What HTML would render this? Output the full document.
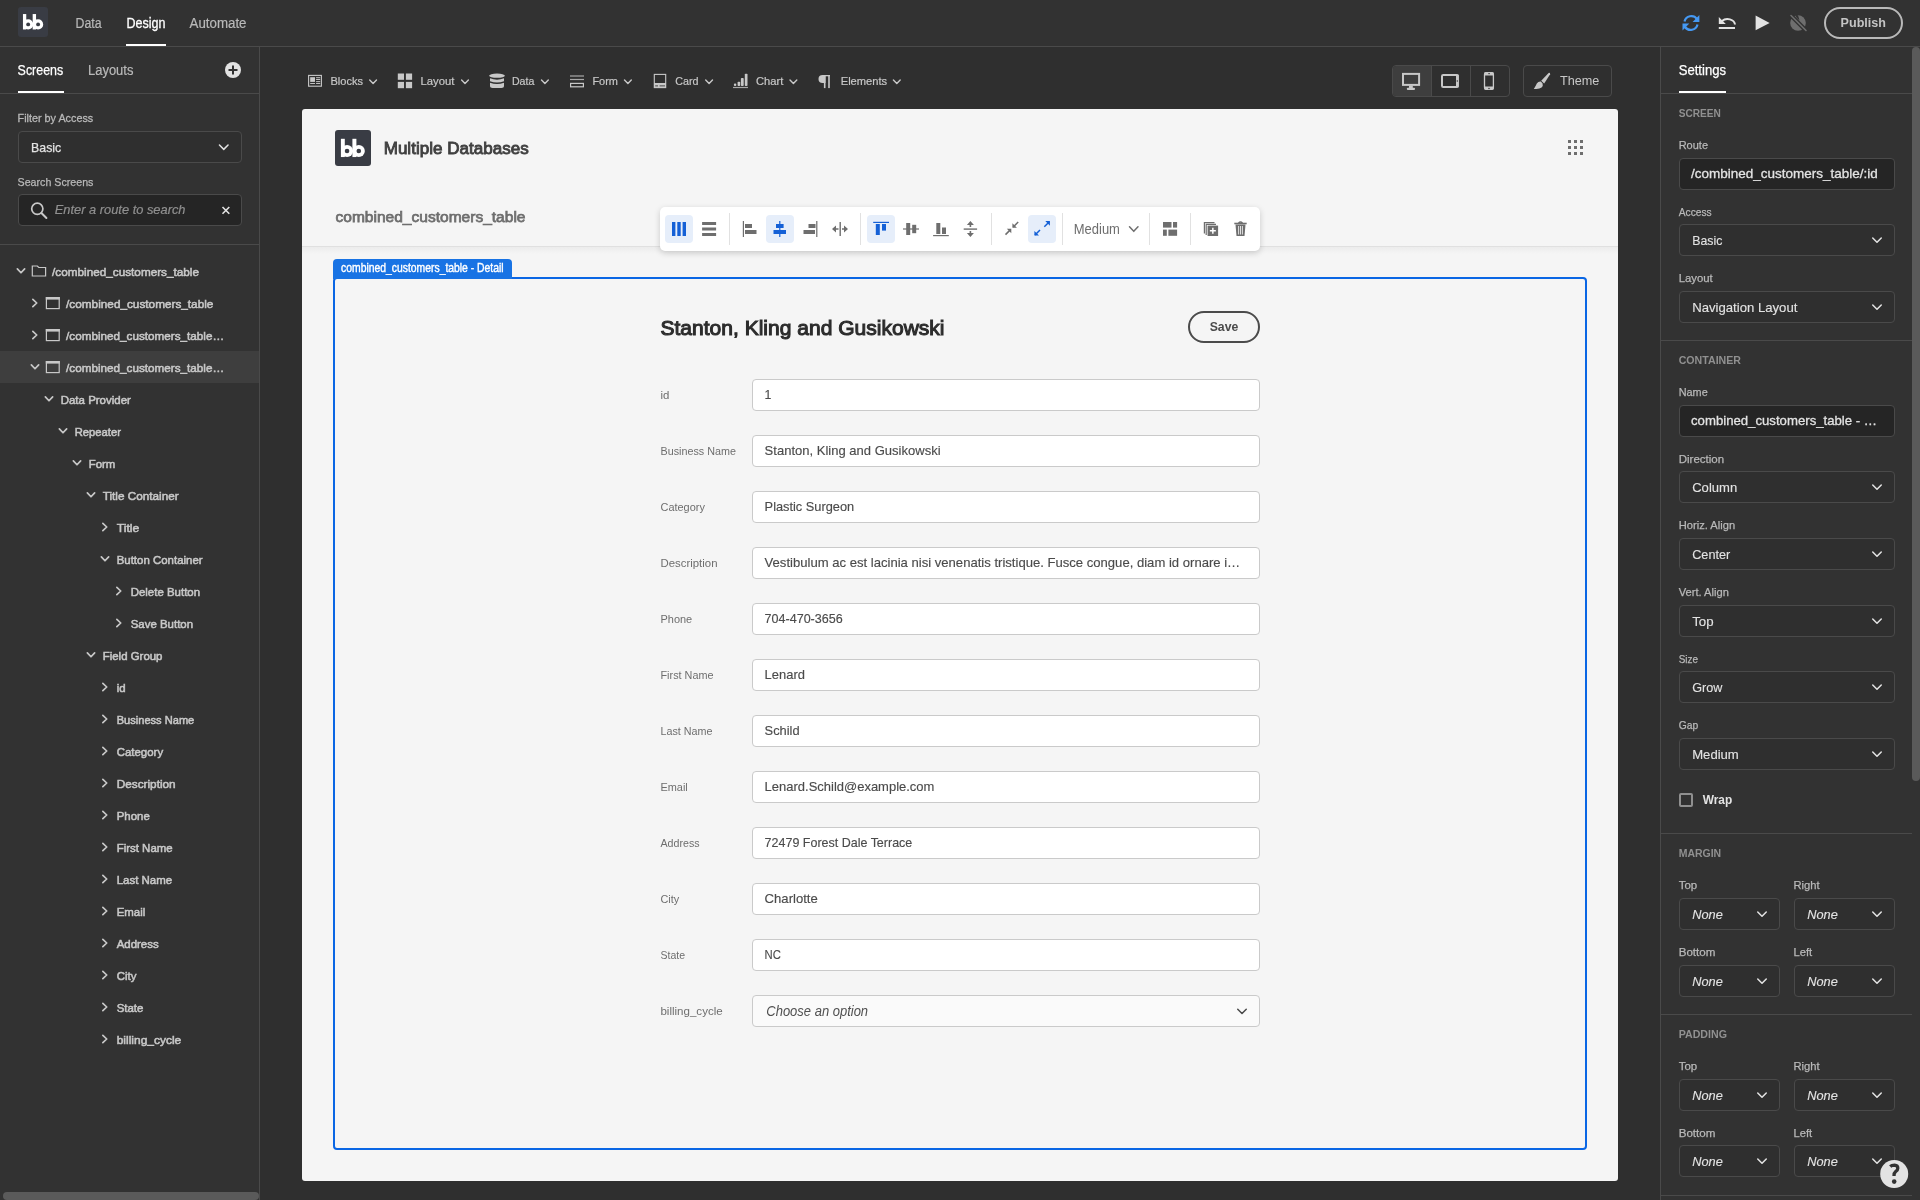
<!DOCTYPE html>
<html><head><meta charset="utf-8"><title>Budibase Design</title>
<style>
html,body{margin:0;padding:0;width:1920px;height:1200px;overflow:hidden;background:#2f2f2f;}
#ui div{position:absolute;box-sizing:border-box;}
#ov{position:absolute;left:0;top:0;will-change:transform;}
text{font-family:"Liberation Sans",sans-serif;}
</style></head><body>
<div id="ui">
<div style="left:0px;top:0px;width:1920px;height:1200px;background:#2f2f2f;"></div>
<div style="left:0px;top:0px;width:1920px;height:46px;background:#323232;"></div>
<div style="left:0px;top:46px;width:1920px;height:1px;background:#4a4a4a;"></div>
<div style="left:0px;top:47px;width:259px;height:1153px;background:#323232;"></div>
<div style="left:259px;top:47px;width:1px;height:1153px;background:#4a4a4a;"></div>
<div style="left:1661px;top:47px;width:259px;height:1153px;background:#323232;"></div>
<div style="left:1660px;top:47px;width:1px;height:1153px;background:#4a4a4a;"></div>
<div style="left:18px;top:7px;width:30px;height:30px;background:#393c44;border-radius:3px;"></div>
<div style="left:126px;top:44px;width:40px;height:2px;background:#ffffff;"></div>
<div style="left:1824px;top:7px;width:79px;height:32px;border:2px solid #b9b9b9;border-radius:16px;"></div>
<div style="left:18px;top:91px;width:46px;height:2px;background:#ffffff;"></div>
<div style="left:0px;top:93px;width:259px;height:1px;background:#4a4a4a;"></div>
<div style="left:18px;top:131px;width:224px;height:32px;background:#2f2f2f;border:1px solid #4a4a4a;border-radius:4px;"></div>
<div style="left:18px;top:194px;width:224px;height:32px;background:#252525;border:1px solid #4a4a4a;border-radius:4px;"></div>
<div style="left:0px;top:244px;width:259px;height:1px;background:#4a4a4a;"></div>
<div style="left:0px;top:351px;width:259px;height:32px;background:#3e3e3e;"></div>
<div style="left:3px;top:1192px;width:256px;height:8px;background:#5a5a5a;border-radius:4px;"></div>
<div style="left:1679px;top:91px;width:47px;height:2px;background:#ffffff;"></div>
<div style="left:1661px;top:93px;width:251px;height:1px;background:#4a4a4a;"></div>
<div style="left:1912px;top:47px;width:8px;height:734px;background:#5a5a5a;border-radius:4px;"></div>
<div style="left:1679px;top:158px;width:216px;height:32px;background:#252525;border:1px solid #4a4a4a;border-radius:4px;"></div>
<div style="left:1679px;top:224px;width:216px;height:32px;background:#2f2f2f;border:1px solid #4a4a4a;border-radius:4px;"></div>
<div style="left:1679px;top:291px;width:216px;height:32px;background:#2f2f2f;border:1px solid #4a4a4a;border-radius:4px;"></div>
<div style="left:1661px;top:340px;width:251px;height:1px;background:#4a4a4a;"></div>
<div style="left:1679px;top:405px;width:216px;height:32px;background:#252525;border:1px solid #4a4a4a;border-radius:4px;"></div>
<div style="left:1679px;top:471px;width:216px;height:32px;background:#2f2f2f;border:1px solid #4a4a4a;border-radius:4px;"></div>
<div style="left:1679px;top:538px;width:216px;height:32px;background:#2f2f2f;border:1px solid #4a4a4a;border-radius:4px;"></div>
<div style="left:1679px;top:605px;width:216px;height:32px;background:#2f2f2f;border:1px solid #4a4a4a;border-radius:4px;"></div>
<div style="left:1679px;top:671px;width:216px;height:32px;background:#2f2f2f;border:1px solid #4a4a4a;border-radius:4px;"></div>
<div style="left:1679px;top:738px;width:216px;height:32px;background:#2f2f2f;border:1px solid #4a4a4a;border-radius:4px;"></div>
<div style="left:1679px;top:793px;width:14px;height:14px;border:2px solid #909090;border-radius:2px;"></div>
<div style="left:1661px;top:833px;width:251px;height:1px;background:#4a4a4a;"></div>
<div style="left:1679px;top:898px;width:101px;height:32px;background:#2f2f2f;border:1px solid #4a4a4a;border-radius:4px;"></div>
<div style="left:1794px;top:898px;width:101px;height:32px;background:#2f2f2f;border:1px solid #4a4a4a;border-radius:4px;"></div>
<div style="left:1679px;top:965px;width:101px;height:32px;background:#2f2f2f;border:1px solid #4a4a4a;border-radius:4px;"></div>
<div style="left:1794px;top:965px;width:101px;height:32px;background:#2f2f2f;border:1px solid #4a4a4a;border-radius:4px;"></div>
<div style="left:1661px;top:1014px;width:251px;height:1px;background:#4a4a4a;"></div>
<div style="left:1679px;top:1079px;width:101px;height:32px;background:#2f2f2f;border:1px solid #4a4a4a;border-radius:4px;"></div>
<div style="left:1794px;top:1079px;width:101px;height:32px;background:#2f2f2f;border:1px solid #4a4a4a;border-radius:4px;"></div>
<div style="left:1679px;top:1145px;width:101px;height:32px;background:#2f2f2f;border:1px solid #4a4a4a;border-radius:4px;"></div>
<div style="left:1794px;top:1145px;width:101px;height:32px;background:#2f2f2f;border:1px solid #4a4a4a;border-radius:4px;"></div>
<div style="left:1661px;top:1195px;width:251px;height:1px;background:#4a4a4a;"></div>
<div style="left:1392px;top:65px;width:118px;height:32px;border:1px solid #4a4a4a;border-radius:4px;"></div>
<div style="left:1393px;top:66px;width:38px;height:30px;background:#3e3e3e;border-radius:3px 0 0 3px;"></div>
<div style="left:1431px;top:66px;width:1px;height:30px;background:#4a4a4a;"></div>
<div style="left:1470px;top:66px;width:1px;height:30px;background:#4a4a4a;"></div>
<div style="left:1523px;top:65px;width:89px;height:32px;border:1px solid #4a4a4a;border-radius:4px;"></div>
<div style="left:302px;top:109px;width:1316px;height:1072px;background:#f5f5f5;border-radius:3px;"></div>
<div style="left:335px;top:130px;width:36px;height:36px;background:#393c44;border-radius:3px;"></div>
<div style="left:302px;top:246px;width:1316px;height:1px;background:#e0e0e0;"></div>
<div style="left:302px;top:247px;width:1316px;height:7px;background:linear-gradient(#ececec,#f5f5f5);"></div>
<div style="left:1568px;top:140px;width:3px;height:3px;background:#6e6e6e;"></div>
<div style="left:1568px;top:146px;width:3px;height:3px;background:#6e6e6e;"></div>
<div style="left:1568px;top:152px;width:3px;height:3px;background:#6e6e6e;"></div>
<div style="left:1574px;top:140px;width:3px;height:3px;background:#6e6e6e;"></div>
<div style="left:1574px;top:146px;width:3px;height:3px;background:#6e6e6e;"></div>
<div style="left:1574px;top:152px;width:3px;height:3px;background:#6e6e6e;"></div>
<div style="left:1580px;top:140px;width:3px;height:3px;background:#6e6e6e;"></div>
<div style="left:1580px;top:146px;width:3px;height:3px;background:#6e6e6e;"></div>
<div style="left:1580px;top:152px;width:3px;height:3px;background:#6e6e6e;"></div>
<div style="left:333px;top:277px;width:1254px;height:873px;border:2px solid #0a66e4;border-radius:4px;"></div>
<div style="left:333px;top:259px;width:179px;height:20px;background:#1873e4;border-radius:4px 4px 0 0;"></div>
<div style="left:1188px;top:311px;width:72px;height:32px;border:2px solid #4b4b4b;border-radius:16px;"></div>
<div style="left:752px;top:379px;width:508px;height:32px;background:#ffffff;border:1px solid #cacaca;border-radius:4px;"></div>
<div style="left:752px;top:435px;width:508px;height:32px;background:#ffffff;border:1px solid #cacaca;border-radius:4px;"></div>
<div style="left:752px;top:491px;width:508px;height:32px;background:#ffffff;border:1px solid #cacaca;border-radius:4px;"></div>
<div style="left:752px;top:547px;width:508px;height:32px;background:#ffffff;border:1px solid #cacaca;border-radius:4px;"></div>
<div style="left:752px;top:603px;width:508px;height:32px;background:#ffffff;border:1px solid #cacaca;border-radius:4px;"></div>
<div style="left:752px;top:659px;width:508px;height:32px;background:#ffffff;border:1px solid #cacaca;border-radius:4px;"></div>
<div style="left:752px;top:715px;width:508px;height:32px;background:#ffffff;border:1px solid #cacaca;border-radius:4px;"></div>
<div style="left:752px;top:771px;width:508px;height:32px;background:#ffffff;border:1px solid #cacaca;border-radius:4px;"></div>
<div style="left:752px;top:827px;width:508px;height:32px;background:#ffffff;border:1px solid #cacaca;border-radius:4px;"></div>
<div style="left:752px;top:883px;width:508px;height:32px;background:#ffffff;border:1px solid #cacaca;border-radius:4px;"></div>
<div style="left:752px;top:939px;width:508px;height:32px;background:#ffffff;border:1px solid #cacaca;border-radius:4px;"></div>
<div style="left:752px;top:995px;width:508px;height:32px;background:#fafafa;border:1px solid #cacaca;border-radius:4px;"></div>
<div style="left:660px;top:207px;width:600px;height:44px;background:#ffffff;border-radius:5px;box-shadow:0 2px 6px rgba(0,0,0,0.18);"></div>
<div style="left:665px;top:215px;width:28px;height:28px;background:#e6eefa;border-radius:4px;"></div>
<div style="left:766px;top:215px;width:28px;height:28px;background:#e6eefa;border-radius:4px;"></div>
<div style="left:867px;top:215px;width:28px;height:28px;background:#e6eefa;border-radius:4px;"></div>
<div style="left:1028px;top:215px;width:28px;height:28px;background:#e6eefa;border-radius:4px;"></div>
<div style="left:729px;top:213px;width:1px;height:32px;background:#e1e1e1;"></div>
<div style="left:860px;top:213px;width:1px;height:32px;background:#e1e1e1;"></div>
<div style="left:991px;top:213px;width:1px;height:32px;background:#e1e1e1;"></div>
<div style="left:1062px;top:213px;width:1px;height:32px;background:#e1e1e1;"></div>
<div style="left:1149px;top:213px;width:1px;height:32px;background:#e1e1e1;"></div>
<div style="left:1190px;top:213px;width:1px;height:32px;background:#e1e1e1;"></div>
</div>
<svg id="ov" width="1920" height="1200" viewBox="0 0 1920 1200">
<g fill="#ffffff"><rect x="22.95" y="14.05" width="3.30" height="15.42"/><circle cx="28.16" cy="24.42" r="5.11"/><rect x="32.67" y="14.05" width="3.38" height="15.42"/><circle cx="38.08" cy="24.42" r="5.11"/></g><circle cx="28.16" cy="24.42" r="1.94" fill="#393c44"/><circle cx="38.08" cy="24.42" r="1.94" fill="#393c44"/>
<text x="75.60" y="28" font-size="14" font-weight="normal" font-style="normal" fill="#b9b9b9" stroke="#b9b9b9" stroke-width="0.2" textLength="25.99" lengthAdjust="spacingAndGlyphs">Data</text>
<text x="126.40" y="28" font-size="14" font-weight="normal" font-style="normal" fill="#ffffff" stroke="#ffffff" stroke-width="0.3" textLength="39.00" lengthAdjust="spacingAndGlyphs">Design</text>
<text x="189.50" y="28" font-size="14" font-weight="normal" font-style="normal" fill="#b9b9b9" stroke="#b9b9b9" stroke-width="0.2" textLength="57.00" lengthAdjust="spacingAndGlyphs">Automate</text>
<g fill="none" stroke="#4599f3" stroke-width="2.2"><path d="M1684.5 21.5 A7 7 0 0 1 1697 19"/><path d="M1697.5 24.5 A7 7 0 0 1 1685 27"/></g><path d="M1699.4 15 L1699.4 22 L1692.6 22 Z" fill="#4599f3"/><path d="M1682.5 30.6 L1682.5 23.6 L1689.3 23.6 Z" fill="#4599f3"/>
<path d="M1722 21 A7.5 6 0 0 1 1735 24.5" fill="none" stroke="#e3e3e3" stroke-width="2"/><path d="M1718.8 17 L1718.8 24 L1725.8 24 Z" fill="#e3e3e3"/><rect x="1718.8" y="27" width="16.2" height="2" fill="#e3e3e3"/>
<path d="M1755.6 15.6 L1769.6 23 L1755.6 30.25 Z" fill="#e3e3e3"/>
<circle cx="1798" cy="23" r="7.8" fill="#6e6e6e"/><path d="M1795 15 Q1797 19 1799.5 20.5 L1798 15.2 Z" fill="#323232"/><path d="M1791 15.5 L1806 30.5" stroke="#323232" stroke-width="4.2"/><path d="M1791 15.5 L1806 30.5" stroke="#6e6e6e" stroke-width="1.6" stroke-linecap="round"/>
<text x="1840.60" y="27" font-size="13.4" font-weight="bold" font-style="normal" fill="#c4c4c4" textLength="45.40" lengthAdjust="spacingAndGlyphs">Publish</text>
<text x="17.60" y="75" font-size="14" font-weight="normal" font-style="normal" fill="#ffffff" stroke="#ffffff" stroke-width="0.25" textLength="45.61" lengthAdjust="spacingAndGlyphs">Screens</text>
<text x="88.00" y="75" font-size="14" font-weight="normal" font-style="normal" fill="#b9b9b9" stroke="#b9b9b9" stroke-width="0.2" textLength="45.41" lengthAdjust="spacingAndGlyphs">Layouts</text>
<circle cx="233" cy="70" r="8" fill="#e3e3e3"/><path d="M233 65.5 V74.5 M228.5 70 H237.5" stroke="#323232" stroke-width="2"/>
<text x="17.60" y="121.8" font-size="11.6" font-weight="normal" font-style="normal" fill="#b9b9b9" stroke="#b9b9b9" stroke-width="0.3" textLength="75.60" lengthAdjust="spacingAndGlyphs">Filter by Access</text>
<text x="31.10" y="152" font-size="13.5" font-weight="normal" font-style="normal" fill="#e3e3e3" stroke="#e3e3e3" stroke-width="0.25" textLength="30.10" lengthAdjust="spacingAndGlyphs">Basic</text>
<path d="M219.45 145.05 L223.75 149.35 L228.05 145.05" fill="none" stroke="#e3e3e3" stroke-width="1.5" stroke-linecap="round" stroke-linejoin="round"/>
<text x="17.60" y="186" font-size="11.4" font-weight="normal" font-style="normal" fill="#b9b9b9" stroke="#b9b9b9" stroke-width="0.25" textLength="75.80" lengthAdjust="spacingAndGlyphs">Search Screens</text>
<circle cx="37.3" cy="208.8" r="5.6" fill="none" stroke="#c8c8c8" stroke-width="1.7"/><path d="M41.4 213 L46.4 218" stroke="#c8c8c8" stroke-width="2" stroke-linecap="round"/>
<text x="54.80" y="214" font-size="13.5" font-weight="normal" font-style="italic" fill="#909090" stroke="#909090" stroke-width="0.2" textLength="130.71" lengthAdjust="spacingAndGlyphs">Enter a route to search</text>
<path d="M222.5 207 L229.3 213.7 M229.3 207 L222.5 213.7" stroke="#e3e3e3" stroke-width="1.6"/>
<path d="M17.35 268.85 L21.00 272.75 L24.65 268.85" fill="none" stroke="#c8c8c8" stroke-width="1.7" stroke-linecap="round" stroke-linejoin="round"/>
<path d="M32.3 266 H37.3 L38.8 267.5 H45.6 V276 H32.3 Z" fill="none" stroke="#c8c8c8" stroke-width="1.2"/>
<text x="52.10" y="276" font-size="11.8" font-weight="normal" font-style="normal" fill="#c8c8c8" stroke="#c8c8c8" stroke-width="0.55" textLength="146.90" lengthAdjust="spacingAndGlyphs">/combined_customers_table</text>
<path d="M32.85 299.35 L36.75 303.00 L32.85 306.65" fill="none" stroke="#c8c8c8" stroke-width="1.7" stroke-linecap="round" stroke-linejoin="round"/>
<rect x="46.4" y="297.6" width="12.8" height="11" fill="none" stroke="#c8c8c8" stroke-width="1.2"/><rect x="45.8" y="297" width="14" height="2.6" fill="#c8c8c8"/>
<text x="66.10" y="308" font-size="11.8" font-weight="normal" font-style="normal" fill="#c8c8c8" stroke="#c8c8c8" stroke-width="0.55" textLength="147.30" lengthAdjust="spacingAndGlyphs">/combined_customers_table</text>
<path d="M32.85 331.35 L36.75 335.00 L32.85 338.65" fill="none" stroke="#c8c8c8" stroke-width="1.7" stroke-linecap="round" stroke-linejoin="round"/>
<rect x="46.4" y="329.6" width="12.8" height="11" fill="none" stroke="#c8c8c8" stroke-width="1.2"/><rect x="45.8" y="329" width="14" height="2.6" fill="#c8c8c8"/>
<text x="66.10" y="340" font-size="11.8" font-weight="normal" font-style="normal" fill="#c8c8c8" stroke="#c8c8c8" stroke-width="0.55" textLength="158.00" lengthAdjust="spacingAndGlyphs">/combined_customers_table…</text>
<path d="M31.35 364.85 L35.00 368.75 L38.65 364.85" fill="none" stroke="#c8c8c8" stroke-width="1.7" stroke-linecap="round" stroke-linejoin="round"/>
<rect x="46.4" y="361.6" width="12.8" height="11" fill="none" stroke="#c8c8c8" stroke-width="1.2"/><rect x="45.8" y="361" width="14" height="2.6" fill="#c8c8c8"/>
<text x="66.10" y="372" font-size="11.8" font-weight="normal" font-style="normal" fill="#c8c8c8" stroke="#c8c8c8" stroke-width="0.55" textLength="158.00" lengthAdjust="spacingAndGlyphs">/combined_customers_table…</text>
<path d="M45.35 396.85 L49.00 400.75 L52.65 396.85" fill="none" stroke="#c8c8c8" stroke-width="1.7" stroke-linecap="round" stroke-linejoin="round"/>
<text x="60.70" y="404" font-size="11.8" font-weight="normal" font-style="normal" fill="#c8c8c8" stroke="#c8c8c8" stroke-width="0.55" textLength="70.20" lengthAdjust="spacingAndGlyphs">Data Provider</text>
<path d="M59.35 428.85 L63.00 432.75 L66.65 428.85" fill="none" stroke="#c8c8c8" stroke-width="1.7" stroke-linecap="round" stroke-linejoin="round"/>
<text x="74.70" y="436" font-size="11.8" font-weight="normal" font-style="normal" fill="#c8c8c8" stroke="#c8c8c8" stroke-width="0.55" textLength="46.30" lengthAdjust="spacingAndGlyphs">Repeater</text>
<path d="M73.35 460.85 L77.00 464.75 L80.65 460.85" fill="none" stroke="#c8c8c8" stroke-width="1.7" stroke-linecap="round" stroke-linejoin="round"/>
<text x="88.70" y="468" font-size="11.8" font-weight="normal" font-style="normal" fill="#c8c8c8" stroke="#c8c8c8" stroke-width="0.55" textLength="26.60" lengthAdjust="spacingAndGlyphs">Form</text>
<path d="M87.35 492.85 L91.00 496.75 L94.65 492.85" fill="none" stroke="#c8c8c8" stroke-width="1.7" stroke-linecap="round" stroke-linejoin="round"/>
<text x="102.70" y="500" font-size="11.8" font-weight="normal" font-style="normal" fill="#c8c8c8" stroke="#c8c8c8" stroke-width="0.55" textLength="76.00" lengthAdjust="spacingAndGlyphs">Title Container</text>
<path d="M102.85 523.35 L106.75 527.00 L102.85 530.65" fill="none" stroke="#c8c8c8" stroke-width="1.7" stroke-linecap="round" stroke-linejoin="round"/>
<text x="116.70" y="532" font-size="11.8" font-weight="normal" font-style="normal" fill="#c8c8c8" stroke="#c8c8c8" stroke-width="0.55" textLength="22.60" lengthAdjust="spacingAndGlyphs">Title</text>
<path d="M101.35 556.85 L105.00 560.75 L108.65 556.85" fill="none" stroke="#c8c8c8" stroke-width="1.7" stroke-linecap="round" stroke-linejoin="round"/>
<text x="116.70" y="564" font-size="11.8" font-weight="normal" font-style="normal" fill="#c8c8c8" stroke="#c8c8c8" stroke-width="0.55" textLength="85.90" lengthAdjust="spacingAndGlyphs">Button Container</text>
<path d="M116.85 587.35 L120.75 591.00 L116.85 594.65" fill="none" stroke="#c8c8c8" stroke-width="1.7" stroke-linecap="round" stroke-linejoin="round"/>
<text x="130.70" y="596" font-size="11.8" font-weight="normal" font-style="normal" fill="#c8c8c8" stroke="#c8c8c8" stroke-width="0.55" textLength="69.36" lengthAdjust="spacingAndGlyphs">Delete Button</text>
<path d="M116.85 619.35 L120.75 623.00 L116.85 626.65" fill="none" stroke="#c8c8c8" stroke-width="1.7" stroke-linecap="round" stroke-linejoin="round"/>
<text x="130.70" y="628" font-size="11.8" font-weight="normal" font-style="normal" fill="#c8c8c8" stroke="#c8c8c8" stroke-width="0.55" textLength="62.36" lengthAdjust="spacingAndGlyphs">Save Button</text>
<path d="M87.35 652.85 L91.00 656.75 L94.65 652.85" fill="none" stroke="#c8c8c8" stroke-width="1.7" stroke-linecap="round" stroke-linejoin="round"/>
<text x="102.70" y="660" font-size="11.8" font-weight="normal" font-style="normal" fill="#c8c8c8" stroke="#c8c8c8" stroke-width="0.55" textLength="59.80" lengthAdjust="spacingAndGlyphs">Field Group</text>
<path d="M102.85 683.35 L106.75 687.00 L102.85 690.65" fill="none" stroke="#c8c8c8" stroke-width="1.7" stroke-linecap="round" stroke-linejoin="round"/>
<text x="116.70" y="692" font-size="11.8" font-weight="normal" font-style="normal" fill="#c8c8c8" stroke="#c8c8c8" stroke-width="0.55" textLength="8.91" lengthAdjust="spacingAndGlyphs">id</text>
<path d="M102.85 715.35 L106.75 719.00 L102.85 722.65" fill="none" stroke="#c8c8c8" stroke-width="1.7" stroke-linecap="round" stroke-linejoin="round"/>
<text x="116.70" y="724" font-size="11.8" font-weight="normal" font-style="normal" fill="#c8c8c8" stroke="#c8c8c8" stroke-width="0.55" textLength="77.60" lengthAdjust="spacingAndGlyphs">Business Name</text>
<path d="M102.85 747.35 L106.75 751.00 L102.85 754.65" fill="none" stroke="#c8c8c8" stroke-width="1.7" stroke-linecap="round" stroke-linejoin="round"/>
<text x="116.70" y="756" font-size="11.8" font-weight="normal" font-style="normal" fill="#c8c8c8" stroke="#c8c8c8" stroke-width="0.55" textLength="46.44" lengthAdjust="spacingAndGlyphs">Category</text>
<path d="M102.85 779.35 L106.75 783.00 L102.85 786.65" fill="none" stroke="#c8c8c8" stroke-width="1.7" stroke-linecap="round" stroke-linejoin="round"/>
<text x="116.70" y="788" font-size="11.8" font-weight="normal" font-style="normal" fill="#c8c8c8" stroke="#c8c8c8" stroke-width="0.55" textLength="59.00" lengthAdjust="spacingAndGlyphs">Description</text>
<path d="M102.85 811.35 L106.75 815.00 L102.85 818.65" fill="none" stroke="#c8c8c8" stroke-width="1.7" stroke-linecap="round" stroke-linejoin="round"/>
<text x="116.70" y="820" font-size="11.8" font-weight="normal" font-style="normal" fill="#c8c8c8" stroke="#c8c8c8" stroke-width="0.55" textLength="33.10" lengthAdjust="spacingAndGlyphs">Phone</text>
<path d="M102.85 843.35 L106.75 847.00 L102.85 850.65" fill="none" stroke="#c8c8c8" stroke-width="1.7" stroke-linecap="round" stroke-linejoin="round"/>
<text x="116.70" y="852" font-size="11.8" font-weight="normal" font-style="normal" fill="#c8c8c8" stroke="#c8c8c8" stroke-width="0.55" textLength="55.96" lengthAdjust="spacingAndGlyphs">First Name</text>
<path d="M102.85 875.35 L106.75 879.00 L102.85 882.65" fill="none" stroke="#c8c8c8" stroke-width="1.7" stroke-linecap="round" stroke-linejoin="round"/>
<text x="116.70" y="884" font-size="11.8" font-weight="normal" font-style="normal" fill="#c8c8c8" stroke="#c8c8c8" stroke-width="0.55" textLength="55.35" lengthAdjust="spacingAndGlyphs">Last Name</text>
<path d="M102.85 907.35 L106.75 911.00 L102.85 914.65" fill="none" stroke="#c8c8c8" stroke-width="1.7" stroke-linecap="round" stroke-linejoin="round"/>
<text x="116.70" y="916" font-size="11.8" font-weight="normal" font-style="normal" fill="#c8c8c8" stroke="#c8c8c8" stroke-width="0.55" textLength="28.62" lengthAdjust="spacingAndGlyphs">Email</text>
<path d="M102.85 939.35 L106.75 943.00 L102.85 946.65" fill="none" stroke="#c8c8c8" stroke-width="1.7" stroke-linecap="round" stroke-linejoin="round"/>
<text x="116.70" y="948" font-size="11.8" font-weight="normal" font-style="normal" fill="#c8c8c8" stroke="#c8c8c8" stroke-width="0.55" textLength="41.99" lengthAdjust="spacingAndGlyphs">Address</text>
<path d="M102.85 971.35 L106.75 975.00 L102.85 978.65" fill="none" stroke="#c8c8c8" stroke-width="1.7" stroke-linecap="round" stroke-linejoin="round"/>
<text x="116.70" y="980" font-size="11.8" font-weight="normal" font-style="normal" fill="#c8c8c8" stroke="#c8c8c8" stroke-width="0.55" textLength="19.71" lengthAdjust="spacingAndGlyphs">City</text>
<path d="M102.85 1003.35 L106.75 1007.00 L102.85 1010.65" fill="none" stroke="#c8c8c8" stroke-width="1.7" stroke-linecap="round" stroke-linejoin="round"/>
<text x="116.70" y="1012" font-size="11.8" font-weight="normal" font-style="normal" fill="#c8c8c8" stroke="#c8c8c8" stroke-width="0.55" textLength="26.73" lengthAdjust="spacingAndGlyphs">State</text>
<path d="M102.85 1035.35 L106.75 1039.00 L102.85 1042.65" fill="none" stroke="#c8c8c8" stroke-width="1.7" stroke-linecap="round" stroke-linejoin="round"/>
<text x="116.70" y="1044" font-size="11.8" font-weight="normal" font-style="normal" fill="#c8c8c8" stroke="#c8c8c8" stroke-width="0.55" textLength="64.60" lengthAdjust="spacingAndGlyphs">billing_cycle</text>
<text x="1678.70" y="75" font-size="14" font-weight="normal" font-style="normal" fill="#ffffff" stroke="#ffffff" stroke-width="0.25" textLength="47.30" lengthAdjust="spacingAndGlyphs">Settings</text>
<text x="1678.70" y="117" font-size="11.6" font-weight="bold" font-style="normal" fill="#909090" textLength="42.20" lengthAdjust="spacingAndGlyphs">SCREEN</text>
<text x="1678.70" y="149" font-size="11.6" font-weight="normal" font-style="normal" fill="#b9b9b9" stroke="#b9b9b9" stroke-width="0.25" textLength="29.31" lengthAdjust="spacingAndGlyphs">Route</text>
<text x="1691.00" y="178" font-size="13.5" font-weight="normal" font-style="normal" fill="#e3e3e3" stroke="#e3e3e3" stroke-width="0.3" textLength="186.70" lengthAdjust="spacingAndGlyphs">/combined_customers_table/:id</text>
<text x="1678.70" y="216" font-size="11.6" font-weight="normal" font-style="normal" fill="#b9b9b9" stroke="#b9b9b9" stroke-width="0.25" textLength="33.00" lengthAdjust="spacingAndGlyphs">Access</text>
<text x="1692.20" y="245" font-size="13.5" font-weight="normal" font-style="normal" fill="#e3e3e3" stroke="#e3e3e3" stroke-width="0.12" textLength="30.10" lengthAdjust="spacingAndGlyphs">Basic</text>
<path d="M1872.75 237.95 L1877.00 242.25 L1881.25 237.95" fill="none" stroke="#e3e3e3" stroke-width="1.5" stroke-linecap="round" stroke-linejoin="round"/>
<text x="1678.70" y="282" font-size="11.6" font-weight="normal" font-style="normal" fill="#b9b9b9" stroke="#b9b9b9" stroke-width="0.25" textLength="34.01" lengthAdjust="spacingAndGlyphs">Layout</text>
<text x="1692.20" y="312" font-size="13.5" font-weight="normal" font-style="normal" fill="#e3e3e3" stroke="#e3e3e3" stroke-width="0.12" textLength="105.21" lengthAdjust="spacingAndGlyphs">Navigation Layout</text>
<path d="M1872.75 304.95 L1877.00 309.25 L1881.25 304.95" fill="none" stroke="#e3e3e3" stroke-width="1.5" stroke-linecap="round" stroke-linejoin="round"/>
<text x="1678.70" y="364" font-size="11.6" font-weight="bold" font-style="normal" fill="#909090" textLength="62.30" lengthAdjust="spacingAndGlyphs">CONTAINER</text>
<text x="1678.70" y="396" font-size="11.6" font-weight="normal" font-style="normal" fill="#b9b9b9" stroke="#b9b9b9" stroke-width="0.25" textLength="28.99" lengthAdjust="spacingAndGlyphs">Name</text>
<text x="1691.00" y="425" font-size="13.5" font-weight="normal" font-style="normal" fill="#e3e3e3" stroke="#e3e3e3" stroke-width="0.3" textLength="186.00" lengthAdjust="spacingAndGlyphs">combined_customers_table - …</text>
<text x="1678.70" y="463" font-size="11.6" font-weight="normal" font-style="normal" fill="#b9b9b9" stroke="#b9b9b9" stroke-width="0.25" textLength="45.40" lengthAdjust="spacingAndGlyphs">Direction</text>
<text x="1692.20" y="492" font-size="13.5" font-weight="normal" font-style="normal" fill="#e3e3e3" stroke="#e3e3e3" stroke-width="0.12" textLength="45.00" lengthAdjust="spacingAndGlyphs">Column</text>
<path d="M1872.75 484.95 L1877.00 489.25 L1881.25 484.95" fill="none" stroke="#e3e3e3" stroke-width="1.5" stroke-linecap="round" stroke-linejoin="round"/>
<text x="1678.70" y="529" font-size="11.6" font-weight="normal" font-style="normal" fill="#b9b9b9" stroke="#b9b9b9" stroke-width="0.25" textLength="56.40" lengthAdjust="spacingAndGlyphs">Horiz. Align</text>
<text x="1692.20" y="559" font-size="13.5" font-weight="normal" font-style="normal" fill="#e3e3e3" stroke="#e3e3e3" stroke-width="0.12" textLength="38.11" lengthAdjust="spacingAndGlyphs">Center</text>
<path d="M1872.75 551.95 L1877.00 556.25 L1881.25 551.95" fill="none" stroke="#e3e3e3" stroke-width="1.5" stroke-linecap="round" stroke-linejoin="round"/>
<text x="1678.70" y="596" font-size="11.6" font-weight="normal" font-style="normal" fill="#b9b9b9" stroke="#b9b9b9" stroke-width="0.25" textLength="50.20" lengthAdjust="spacingAndGlyphs">Vert. Align</text>
<text x="1692.20" y="626" font-size="13.5" font-weight="normal" font-style="normal" fill="#e3e3e3" stroke="#e3e3e3" stroke-width="0.12" textLength="21.40" lengthAdjust="spacingAndGlyphs">Top</text>
<path d="M1872.75 618.95 L1877.00 623.25 L1881.25 618.95" fill="none" stroke="#e3e3e3" stroke-width="1.5" stroke-linecap="round" stroke-linejoin="round"/>
<text x="1678.70" y="663" font-size="11.6" font-weight="normal" font-style="normal" fill="#b9b9b9" stroke="#b9b9b9" stroke-width="0.25" textLength="19.30" lengthAdjust="spacingAndGlyphs">Size</text>
<text x="1692.20" y="692" font-size="13.5" font-weight="normal" font-style="normal" fill="#e3e3e3" stroke="#e3e3e3" stroke-width="0.12" textLength="30.16" lengthAdjust="spacingAndGlyphs">Grow</text>
<path d="M1872.75 684.95 L1877.00 689.25 L1881.25 684.95" fill="none" stroke="#e3e3e3" stroke-width="1.5" stroke-linecap="round" stroke-linejoin="round"/>
<text x="1678.70" y="729" font-size="11.6" font-weight="normal" font-style="normal" fill="#b9b9b9" stroke="#b9b9b9" stroke-width="0.25" textLength="19.50" lengthAdjust="spacingAndGlyphs">Gap</text>
<text x="1692.20" y="759" font-size="13.5" font-weight="normal" font-style="normal" fill="#e3e3e3" stroke="#e3e3e3" stroke-width="0.12" textLength="46.60" lengthAdjust="spacingAndGlyphs">Medium</text>
<path d="M1872.75 751.95 L1877.00 756.25 L1881.25 751.95" fill="none" stroke="#e3e3e3" stroke-width="1.5" stroke-linecap="round" stroke-linejoin="round"/>
<text x="1702.75" y="804" font-size="13.4" font-weight="bold" font-style="normal" fill="#e3e3e3" textLength="29.50" lengthAdjust="spacingAndGlyphs">Wrap</text>
<text x="1678.70" y="857" font-size="11.6" font-weight="bold" font-style="normal" fill="#909090" textLength="42.45" lengthAdjust="spacingAndGlyphs">MARGIN</text>
<text x="1678.70" y="889" font-size="11.6" font-weight="normal" font-style="normal" fill="#b9b9b9" stroke="#b9b9b9" stroke-width="0.25" textLength="18.50" lengthAdjust="spacingAndGlyphs">Top</text>
<text x="1793.50" y="889" font-size="11.6" font-weight="normal" font-style="normal" fill="#b9b9b9" stroke="#b9b9b9" stroke-width="0.25" textLength="26.21" lengthAdjust="spacingAndGlyphs">Right</text>
<text x="1692.20" y="919" font-size="13.5" font-weight="normal" font-style="italic" fill="#e3e3e3" stroke="#e3e3e3" stroke-width="0.12" textLength="30.60" lengthAdjust="spacingAndGlyphs">None</text>
<path d="M1757.75 911.95 L1762.00 916.25 L1766.25 911.95" fill="none" stroke="#e3e3e3" stroke-width="1.5" stroke-linecap="round" stroke-linejoin="round"/>
<text x="1807.20" y="919" font-size="13.5" font-weight="normal" font-style="italic" fill="#e3e3e3" stroke="#e3e3e3" stroke-width="0.12" textLength="30.60" lengthAdjust="spacingAndGlyphs">None</text>
<path d="M1872.75 911.95 L1877.00 916.25 L1881.25 911.95" fill="none" stroke="#e3e3e3" stroke-width="1.5" stroke-linecap="round" stroke-linejoin="round"/>
<text x="1678.70" y="956" font-size="11.6" font-weight="normal" font-style="normal" fill="#b9b9b9" stroke="#b9b9b9" stroke-width="0.25" textLength="36.75" lengthAdjust="spacingAndGlyphs">Bottom</text>
<text x="1793.50" y="956" font-size="11.6" font-weight="normal" font-style="normal" fill="#b9b9b9" stroke="#b9b9b9" stroke-width="0.25" textLength="18.70" lengthAdjust="spacingAndGlyphs">Left</text>
<text x="1692.20" y="986" font-size="13.5" font-weight="normal" font-style="italic" fill="#e3e3e3" stroke="#e3e3e3" stroke-width="0.12" textLength="30.60" lengthAdjust="spacingAndGlyphs">None</text>
<path d="M1757.75 978.95 L1762.00 983.25 L1766.25 978.95" fill="none" stroke="#e3e3e3" stroke-width="1.5" stroke-linecap="round" stroke-linejoin="round"/>
<text x="1807.20" y="986" font-size="13.5" font-weight="normal" font-style="italic" fill="#e3e3e3" stroke="#e3e3e3" stroke-width="0.12" textLength="30.60" lengthAdjust="spacingAndGlyphs">None</text>
<path d="M1872.75 978.95 L1877.00 983.25 L1881.25 978.95" fill="none" stroke="#e3e3e3" stroke-width="1.5" stroke-linecap="round" stroke-linejoin="round"/>
<text x="1678.70" y="1038" font-size="11.6" font-weight="bold" font-style="normal" fill="#909090" textLength="48.30" lengthAdjust="spacingAndGlyphs">PADDING</text>
<text x="1678.70" y="1070" font-size="11.6" font-weight="normal" font-style="normal" fill="#b9b9b9" stroke="#b9b9b9" stroke-width="0.25" textLength="18.50" lengthAdjust="spacingAndGlyphs">Top</text>
<text x="1793.50" y="1070" font-size="11.6" font-weight="normal" font-style="normal" fill="#b9b9b9" stroke="#b9b9b9" stroke-width="0.25" textLength="26.21" lengthAdjust="spacingAndGlyphs">Right</text>
<text x="1692.20" y="1100" font-size="13.5" font-weight="normal" font-style="italic" fill="#e3e3e3" stroke="#e3e3e3" stroke-width="0.12" textLength="30.60" lengthAdjust="spacingAndGlyphs">None</text>
<path d="M1757.75 1092.95 L1762.00 1097.25 L1766.25 1092.95" fill="none" stroke="#e3e3e3" stroke-width="1.5" stroke-linecap="round" stroke-linejoin="round"/>
<text x="1807.20" y="1100" font-size="13.5" font-weight="normal" font-style="italic" fill="#e3e3e3" stroke="#e3e3e3" stroke-width="0.12" textLength="30.60" lengthAdjust="spacingAndGlyphs">None</text>
<path d="M1872.75 1092.95 L1877.00 1097.25 L1881.25 1092.95" fill="none" stroke="#e3e3e3" stroke-width="1.5" stroke-linecap="round" stroke-linejoin="round"/>
<text x="1678.70" y="1137" font-size="11.6" font-weight="normal" font-style="normal" fill="#b9b9b9" stroke="#b9b9b9" stroke-width="0.25" textLength="36.75" lengthAdjust="spacingAndGlyphs">Bottom</text>
<text x="1793.50" y="1137" font-size="11.6" font-weight="normal" font-style="normal" fill="#b9b9b9" stroke="#b9b9b9" stroke-width="0.25" textLength="18.70" lengthAdjust="spacingAndGlyphs">Left</text>
<text x="1692.20" y="1166" font-size="13.5" font-weight="normal" font-style="italic" fill="#e3e3e3" stroke="#e3e3e3" stroke-width="0.12" textLength="30.60" lengthAdjust="spacingAndGlyphs">None</text>
<path d="M1757.75 1158.95 L1762.00 1163.25 L1766.25 1158.95" fill="none" stroke="#e3e3e3" stroke-width="1.5" stroke-linecap="round" stroke-linejoin="round"/>
<text x="1807.20" y="1166" font-size="13.5" font-weight="normal" font-style="italic" fill="#e3e3e3" stroke="#e3e3e3" stroke-width="0.12" textLength="30.60" lengthAdjust="spacingAndGlyphs">None</text>
<path d="M1872.75 1158.95 L1877.00 1163.25 L1881.25 1158.95" fill="none" stroke="#e3e3e3" stroke-width="1.5" stroke-linecap="round" stroke-linejoin="round"/>
<circle cx="1894.2" cy="1174" r="14" fill="#e3e3e3"/>
<path d="M1890.2 1166.4 Q1891.6 1165.2 1894.6 1165.2 Q1897.8 1165.4 1897.8 1168.2 Q1897.8 1170.2 1895.6 1171.6 Q1894 1172.8 1894 1176" fill="none" stroke="#323232" stroke-width="3.3"/><circle cx="1894.2" cy="1181.6" r="2.3" fill="#323232"/>
<text x="330.50" y="85" font-size="11.8" font-weight="normal" font-style="normal" fill="#c8c8c8" stroke="#c8c8c8" stroke-width="0.2" textLength="32.50" lengthAdjust="spacingAndGlyphs">Blocks</text>
<path d="M369.70 79.90 L373.10 83.50 L376.50 79.90" fill="none" stroke="#c8c8c8" stroke-width="1.4" stroke-linecap="round" stroke-linejoin="round"/>
<text x="420.50" y="85" font-size="11.8" font-weight="normal" font-style="normal" fill="#c8c8c8" stroke="#c8c8c8" stroke-width="0.2" textLength="33.91" lengthAdjust="spacingAndGlyphs">Layout</text>
<path d="M461.60 79.90 L465.00 83.50 L468.40 79.90" fill="none" stroke="#c8c8c8" stroke-width="1.4" stroke-linecap="round" stroke-linejoin="round"/>
<text x="511.90" y="85" font-size="11.8" font-weight="normal" font-style="normal" fill="#c8c8c8" stroke="#c8c8c8" stroke-width="0.2" textLength="22.39" lengthAdjust="spacingAndGlyphs">Data</text>
<path d="M541.50 79.90 L544.90 83.50 L548.30 79.90" fill="none" stroke="#c8c8c8" stroke-width="1.4" stroke-linecap="round" stroke-linejoin="round"/>
<text x="592.40" y="85" font-size="11.8" font-weight="normal" font-style="normal" fill="#c8c8c8" stroke="#c8c8c8" stroke-width="0.2" textLength="25.60" lengthAdjust="spacingAndGlyphs">Form</text>
<path d="M624.50 79.90 L627.90 83.50 L631.30 79.90" fill="none" stroke="#c8c8c8" stroke-width="1.4" stroke-linecap="round" stroke-linejoin="round"/>
<text x="675.20" y="85" font-size="11.8" font-weight="normal" font-style="normal" fill="#c8c8c8" stroke="#c8c8c8" stroke-width="0.2" textLength="23.29" lengthAdjust="spacingAndGlyphs">Card</text>
<path d="M705.70 79.90 L709.10 83.50 L712.50 79.90" fill="none" stroke="#c8c8c8" stroke-width="1.4" stroke-linecap="round" stroke-linejoin="round"/>
<text x="756.00" y="85" font-size="11.8" font-weight="normal" font-style="normal" fill="#c8c8c8" stroke="#c8c8c8" stroke-width="0.2" textLength="27.30" lengthAdjust="spacingAndGlyphs">Chart</text>
<path d="M790.00 79.90 L793.40 83.50 L796.80 79.90" fill="none" stroke="#c8c8c8" stroke-width="1.4" stroke-linecap="round" stroke-linejoin="round"/>
<text x="840.70" y="85" font-size="11.8" font-weight="normal" font-style="normal" fill="#c8c8c8" stroke="#c8c8c8" stroke-width="0.2" textLength="46.51" lengthAdjust="spacingAndGlyphs">Elements</text>
<path d="M893.40 79.90 L896.80 83.50 L900.20 79.90" fill="none" stroke="#c8c8c8" stroke-width="1.4" stroke-linecap="round" stroke-linejoin="round"/>
<rect x="308.6" y="75.4" width="12.8" height="10.8" fill="none" stroke="#c8c8c8" stroke-width="1.1"/><rect x="310.2" y="77.2" width="4.8" height="4.7" fill="#c8c8c8"/><path d="M316.1 77.7 H320.2 M316.1 79.5 H320.2 M316.1 81.6 H320.2 M316.1 83.5 H320.2 M310.2 83.5 H315" stroke="#c8c8c8" stroke-width="0.95"/>
<rect x="397.8" y="73.5" width="6.2" height="6.3" fill="#c8c8c8"/><rect x="405.9" y="73.5" width="6.2" height="6.3" fill="#c8c8c8"/><rect x="397.8" y="81.9" width="6.2" height="6.3" fill="#c8c8c8"/><rect x="405.9" y="81.9" width="6.2" height="6.3" fill="#c8c8c8"/>
<ellipse cx="497" cy="75.7" rx="7.9" ry="2.1" fill="#c8c8c8"/><path d="M490 78.3 Q497 81 504 78.3 V81.2 Q497 84 490 81.2 Z" fill="#c8c8c8"/><path d="M490 82.7 Q497 85.4 504 82.7 V86.2 Q504 88 501.5 88 H492.5 Q490 88 490 86.2 Z" fill="#c8c8c8"/>
<path d="M570 76 H584" stroke="#8a8a8a" stroke-width="1.6"/><path d="M570 79.5 H584" stroke="#a8a8a8" stroke-width="1.2"/><rect x="570.6" y="83.4" width="12.8" height="3.4" fill="none" stroke="#c8c8c8" stroke-width="1.2"/>
<rect x="654.3" y="74.4" width="11.4" height="13.2" fill="none" stroke="#c8c8c8" stroke-width="1.1"/><rect x="654" y="83" width="12" height="4.9" fill="#c8c8c8"/><rect x="655.2" y="85" width="2.8" height="1.6" fill="#777"/><rect x="659.6" y="85" width="5.4" height="1.6" fill="#777"/>
<rect x="733" y="86.9" width="15" height="1.2" fill="#a8a8a8"/><rect x="733.9" y="83.4" width="2.4" height="2.6" rx="1" fill="#c8c8c8"/><rect x="737.6" y="81.8" width="2.6" height="4.2" rx="0.8" fill="#c8c8c8"/><rect x="740.9" y="78" width="2.8" height="8" rx="0.8" fill="#c8c8c8"/><rect x="744.8" y="73.8" width="2.7" height="12.2" rx="0.8" fill="#c8c8c8"/>
<path d="M825.5 75 H822.6 A4.1 4 0 0 0 822.6 83 H825.5 Z" fill="#c8c8c8"/><rect x="822.5" y="75" width="7.4" height="1.3" fill="#c8c8c8"/><rect x="823.9" y="75" width="1.6" height="13.1" fill="#c8c8c8"/><rect x="828.2" y="75" width="1.6" height="13.1" fill="#c8c8c8"/>
<rect x="1403" y="73.9" width="16.1" height="11" fill="none" stroke="#c8c8c8" stroke-width="2"/><rect x="1409" y="85.5" width="3.8" height="2.6" fill="#c8c8c8"/><rect x="1406.8" y="87.8" width="8.2" height="2.2" rx="1" fill="#c8c8c8"/>
<rect x="1442" y="75" width="15.8" height="12" rx="1.2" fill="none" stroke="#c8c8c8" stroke-width="2"/><rect x="1456" y="74.5" width="2.8" height="13" rx="0.8" fill="#c8c8c8"/><circle cx="1457.3" cy="81" r="0.7" fill="#2f2f2f"/>
<rect x="1484.5" y="72.7" width="8.9" height="16.7" rx="1.8" fill="none" stroke="#c8c8c8" stroke-width="1.3"/><path d="M1484 75.4 V74.2 Q1484 72.1 1486 72.1 H1492 Q1494 72.1 1494 74.2 V75.4 Z" fill="#c8c8c8"/><path d="M1484 86.5 V88 Q1484 90.1 1486 90.1 H1492 Q1494 90.1 1494 88 V86.5 Z" fill="#c8c8c8"/><rect x="1488.2" y="73.3" width="1.8" height="0.8" fill="#2f2f2f"/><circle cx="1489" cy="88.4" r="0.75" fill="#2f2f2f"/>
<path d="M1548.6 72.9 Q1550.2 72.4 1550.1 74.2 L1544.2 83.4 L1541.2 80.8 Z" fill="#c8c8c8"/><path d="M1540.8 81.6 Q1538.2 81.4 1536.8 83.6 Q1535.6 86.6 1533.8 88.9 Q1539.2 89.6 1541.6 87.6 Q1543.4 85.8 1542.6 83.4 Z" fill="#c8c8c8"/>
<text x="1560.00" y="85" font-size="13.6" font-weight="normal" font-style="normal" fill="#c8c8c8" textLength="39.40" lengthAdjust="spacingAndGlyphs">Theme</text>
<g fill="#ffffff"><rect x="340.90" y="138.80" width="3.90" height="18.25"/><circle cx="347.06" cy="151.07" r="6.05"/><rect x="352.40" y="138.80" width="4.00" height="18.25"/><circle cx="358.80" cy="151.07" r="6.05"/></g><circle cx="347.06" cy="151.07" r="2.30" fill="#393c44"/><circle cx="358.80" cy="151.07" r="2.30" fill="#393c44"/>
<text x="383.70" y="153.7" font-size="17.3" font-weight="normal" font-style="normal" fill="#404040" stroke="#404040" stroke-width="0.9" textLength="145.01" lengthAdjust="spacingAndGlyphs">Multiple Databases</text>
<text x="335.50" y="221.7" font-size="15.3" font-weight="normal" font-style="normal" fill="#6e6e6e" stroke="#6e6e6e" stroke-width="0.75" textLength="190.00" lengthAdjust="spacingAndGlyphs">combined_customers_table</text>
<text x="341.10" y="272.1" font-size="12.2" font-weight="normal" font-style="normal" fill="#ffffff" stroke="#ffffff" stroke-width="0.4" textLength="162.50" lengthAdjust="spacingAndGlyphs">combined_customers_table - Detail</text>
<text x="660.50" y="334.7" font-size="21.1" font-weight="normal" font-style="normal" fill="#2c2c2c" stroke="#2c2c2c" stroke-width="1.05" textLength="284.01" lengthAdjust="spacingAndGlyphs">Stanton, Kling and Gusikowski</text>
<text x="1209.70" y="331" font-size="13.4" font-weight="bold" font-style="normal" fill="#4b4b4b" textLength="28.61" lengthAdjust="spacingAndGlyphs">Save</text>
<text x="660.50" y="399" font-size="11.6" font-weight="normal" font-style="normal" fill="#6e6e6e" textLength="8.90" lengthAdjust="spacingAndGlyphs">id</text>
<text x="764.60" y="399" font-size="13.6" font-weight="normal" font-style="normal" fill="#4b4b4b" stroke="#4b4b4b" stroke-width="0.15" textLength="6.88" lengthAdjust="spacingAndGlyphs">1</text>
<text x="660.50" y="455" font-size="11.6" font-weight="normal" font-style="normal" fill="#6e6e6e" textLength="75.40" lengthAdjust="spacingAndGlyphs">Business Name</text>
<text x="764.60" y="455" font-size="13.6" font-weight="normal" font-style="normal" fill="#4b4b4b" stroke="#4b4b4b" stroke-width="0.15" textLength="176.00" lengthAdjust="spacingAndGlyphs">Stanton, Kling and Gusikowski</text>
<text x="660.50" y="511" font-size="11.6" font-weight="normal" font-style="normal" fill="#6e6e6e" textLength="44.40" lengthAdjust="spacingAndGlyphs">Category</text>
<text x="764.60" y="511" font-size="13.6" font-weight="normal" font-style="normal" fill="#4b4b4b" stroke="#4b4b4b" stroke-width="0.15" textLength="89.60" lengthAdjust="spacingAndGlyphs">Plastic Surgeon</text>
<text x="660.50" y="567" font-size="11.6" font-weight="normal" font-style="normal" fill="#6e6e6e" textLength="57.00" lengthAdjust="spacingAndGlyphs">Description</text>
<text x="764.60" y="567" font-size="13.6" font-weight="normal" font-style="normal" fill="#4b4b4b" stroke="#4b4b4b" stroke-width="0.15" textLength="475.60" lengthAdjust="spacingAndGlyphs">Vestibulum ac est lacinia nisi venenatis tristique. Fusce congue, diam id ornare i…</text>
<text x="660.50" y="623" font-size="11.6" font-weight="normal" font-style="normal" fill="#6e6e6e" textLength="31.70" lengthAdjust="spacingAndGlyphs">Phone</text>
<text x="764.60" y="623" font-size="13.6" font-weight="normal" font-style="normal" fill="#4b4b4b" stroke="#4b4b4b" stroke-width="0.15" textLength="78.09" lengthAdjust="spacingAndGlyphs">704-470-3656</text>
<text x="660.50" y="679" font-size="11.6" font-weight="normal" font-style="normal" fill="#6e6e6e" textLength="53.00" lengthAdjust="spacingAndGlyphs">First Name</text>
<text x="764.60" y="679" font-size="13.6" font-weight="normal" font-style="normal" fill="#4b4b4b" stroke="#4b4b4b" stroke-width="0.15" textLength="40.30" lengthAdjust="spacingAndGlyphs">Lenard</text>
<text x="660.50" y="735" font-size="11.6" font-weight="normal" font-style="normal" fill="#6e6e6e" textLength="52.01" lengthAdjust="spacingAndGlyphs">Last Name</text>
<text x="764.60" y="735" font-size="13.6" font-weight="normal" font-style="normal" fill="#4b4b4b" stroke="#4b4b4b" stroke-width="0.15" textLength="35.00" lengthAdjust="spacingAndGlyphs">Schild</text>
<text x="660.50" y="791" font-size="11.6" font-weight="normal" font-style="normal" fill="#6e6e6e" textLength="27.29" lengthAdjust="spacingAndGlyphs">Email</text>
<text x="764.60" y="791" font-size="13.6" font-weight="normal" font-style="normal" fill="#4b4b4b" stroke="#4b4b4b" stroke-width="0.15" textLength="169.80" lengthAdjust="spacingAndGlyphs">Lenard.Schild@example.com</text>
<text x="660.50" y="847" font-size="11.6" font-weight="normal" font-style="normal" fill="#6e6e6e" textLength="39.01" lengthAdjust="spacingAndGlyphs">Address</text>
<text x="764.60" y="847" font-size="13.6" font-weight="normal" font-style="normal" fill="#4b4b4b" stroke="#4b4b4b" stroke-width="0.15" textLength="147.70" lengthAdjust="spacingAndGlyphs">72479 Forest Dale Terrace</text>
<text x="660.50" y="903" font-size="11.6" font-weight="normal" font-style="normal" fill="#6e6e6e" textLength="18.70" lengthAdjust="spacingAndGlyphs">City</text>
<text x="764.60" y="903" font-size="13.6" font-weight="normal" font-style="normal" fill="#4b4b4b" stroke="#4b4b4b" stroke-width="0.15" textLength="53.20" lengthAdjust="spacingAndGlyphs">Charlotte</text>
<text x="660.50" y="959" font-size="11.6" font-weight="normal" font-style="normal" fill="#6e6e6e" textLength="24.50" lengthAdjust="spacingAndGlyphs">State</text>
<text x="764.60" y="959" font-size="13.6" font-weight="normal" font-style="normal" fill="#4b4b4b" stroke="#4b4b4b" stroke-width="0.15" textLength="16.30" lengthAdjust="spacingAndGlyphs">NC</text>
<text x="660.40" y="1015.2" font-size="11.6" font-weight="normal" font-style="normal" fill="#6e6e6e" textLength="62.30" lengthAdjust="spacingAndGlyphs">billing_cycle</text>
<text x="766.30" y="1015.8" font-size="13.8" font-weight="normal" font-style="italic" fill="#505050" textLength="101.81" lengthAdjust="spacingAndGlyphs">Choose an option</text>
<path d="M1237.75 1009.25 L1242.00 1013.55 L1246.25 1009.25" fill="none" stroke="#4b4b4b" stroke-width="1.5" stroke-linecap="round" stroke-linejoin="round"/>
<rect x="672" y="222" width="3.4" height="14" fill="#1460d6"/><rect x="677.3" y="222" width="3.4" height="14" fill="#1460d6"/><rect x="682.6" y="222" width="3.4" height="14" fill="#1460d6"/>
<rect x="702.1" y="222" width="14" height="3" fill="#6e6e6e"/><rect x="702.1" y="227.5" width="14" height="3" fill="#6e6e6e"/><rect x="702.1" y="233" width="14" height="3" fill="#6e6e6e"/>
<rect x="742.8" y="221" width="1.2" height="16" fill="#6e6e6e"/><rect x="745" y="224" width="7" height="4" fill="#6e6e6e"/><rect x="745" y="230" width="11.5" height="4" fill="#6e6e6e"/>
<rect x="779.2" y="221" width="1.2" height="16" fill="#1460d6"/><rect x="776" y="224" width="7.6" height="4" fill="#1460d6"/><rect x="773.5" y="230" width="12.5" height="4" fill="#1460d6"/>
<rect x="816.2" y="221" width="1.2" height="16" fill="#6e6e6e"/><rect x="808.5" y="224" width="7" height="4" fill="#6e6e6e"/><rect x="803.5" y="230" width="11.5" height="4" fill="#6e6e6e"/>
<rect x="839.5" y="222" width="1.4" height="14" fill="#6e6e6e"/><path d="M832 229 L836 225.5 V232.5 Z M848 229 L844 225.5 V232.5 Z" fill="#6e6e6e"/><path d="M835 229 H838.5 M842 229 H845" stroke="#6e6e6e" stroke-width="1.6"/>
<rect x="873.2" y="221.8" width="15.8" height="1.2" fill="#1460d6"/><rect x="875.8" y="224" width="4" height="11" fill="#1460d6"/><rect x="882" y="224" width="4" height="6.6" fill="#1460d6"/>
<rect x="903" y="228.4" width="16" height="1.2" fill="#6e6e6e"/><rect x="906.2" y="223" width="4" height="12" fill="#6e6e6e"/><rect x="912.2" y="224.8" width="4" height="8.4" fill="#6e6e6e"/>
<rect x="933.1" y="235" width="15.7" height="1.2" fill="#6e6e6e"/><rect x="936.3" y="223" width="4" height="11" fill="#6e6e6e"/><rect x="942" y="227.5" width="4" height="6.5" fill="#6e6e6e"/>
<rect x="963.7" y="228.4" width="13.4" height="1.4" fill="#6e6e6e"/><path d="M970.4 221 L966.9 225 H973.9 Z M970.4 237 L966.9 233 H973.9 Z" fill="#6e6e6e"/><path d="M970.4 224 V227 M970.4 231 V234" stroke="#6e6e6e" stroke-width="1.6"/>
<path d="M1005.5 234.6 L1010.5 229.6 M1018.2 222 L1013.2 227" stroke="#6e6e6e" stroke-width="1.5"/><path d="M1011.3 228.8 H1006.8 L1011.3 233.3 Z M1012.4 227.8 H1016.9 L1012.4 223.3 Z" fill="#6e6e6e"/>
<path d="M1035 235 L1040 230 M1049.3 221.7 L1044.3 226.7" stroke="#1460d6" stroke-width="1.5"/><path d="M1034.4 235.6 V231 L1039 235.6 Z M1049.9 221.1 V225.7 L1045.3 221.1 Z" fill="#1460d6"/>
<text x="1073.75" y="234" font-size="13.8" font-weight="normal" font-style="normal" fill="#6e6e6e" textLength="46.20" lengthAdjust="spacingAndGlyphs">Medium</text>
<path d="M1129.50 226.85 L1133.75 231.35 L1138.00 226.85" fill="none" stroke="#6e6e6e" stroke-width="1.5" stroke-linecap="round" stroke-linejoin="round"/>
<rect x="1163" y="222" width="8.5" height="5.6" fill="#6e6e6e"/><rect x="1173" y="222" width="4.1" height="5.6" fill="#6e6e6e"/><rect x="1163" y="229.6" width="3.8" height="6.2" fill="#6e6e6e"/><rect x="1168.4" y="229.6" width="8.7" height="6.2" fill="#6e6e6e"/>
<path d="M1204.4 233.5 V222.6 H1214.5" fill="none" stroke="#6e6e6e" stroke-width="1.2"/><path d="M1206.2 235 V224.3 H1216" fill="none" stroke="#6e6e6e" stroke-width="1.2"/><rect x="1207.6" y="225.6" width="10.5" height="10.4" fill="#6e6e6e"/><path d="M1212.85 227.8 V233.8 M1209.85 230.8 H1215.85" stroke="#fff" stroke-width="1.5"/>
<path d="M1234.3 223.5 H1246.7" stroke="#6e6e6e" stroke-width="1.6"/><path d="M1238.5 223 Q1240.5 221 1242.5 223" fill="none" stroke="#6e6e6e" stroke-width="1.4"/><path d="M1235.5 224.5 H1245.5 L1244.5 236 H1236.5 Z" fill="#6e6e6e"/><path d="M1238.6 226 V234.5 M1240.5 226 V234.5 M1242.4 226 V234.5" stroke="#fff" stroke-width="0.8"/>
</svg>
</body></html>
